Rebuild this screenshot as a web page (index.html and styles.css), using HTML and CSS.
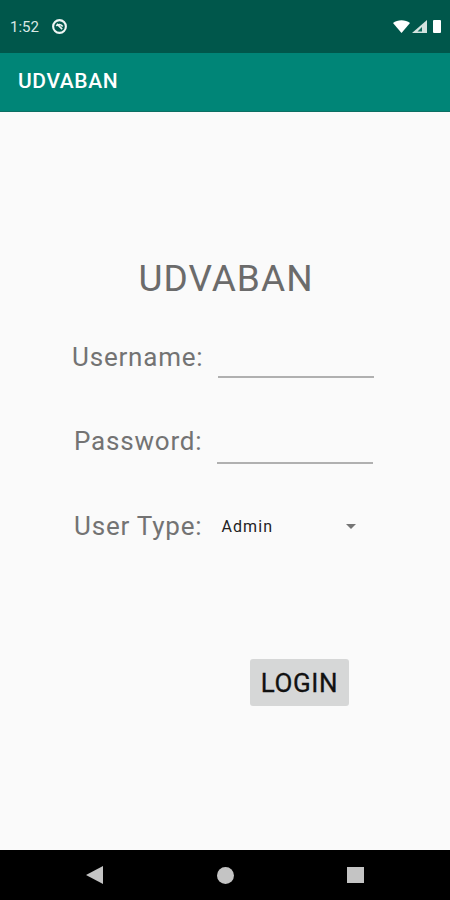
FILE: index.html
```html
<!DOCTYPE html>
<html lang="en">
<head>
    <meta charset="UTF-8">
    <meta name="viewport" content="width=device-width, initial-scale=1.0">
    <title>UDVABAN</title>
    <link rel="stylesheet" href="styles.css">
</head>
<body>
    <div class="phone">
        <div class="status-bar">
            <div class="status-left">
                <span class="clock">1:52</span>
                <svg class="dnd-icon" width="17" height="17" viewBox="0 0 16 16">
                    <circle cx="8" cy="8" r="6" fill="none" stroke="#eef5f3" stroke-width="2"/>
                    <path d="M5 7.5 C6.5 5.5 9.5 5.5 11 8 M5.5 5.5 L10.5 10.5" fill="none" stroke="#eef5f3" stroke-width="1.5"/>
                </svg>
            </div>
            <div class="status-right">
                <svg width="17" height="13" viewBox="0 0 17 13"><path d="M0 3 C4.5 -0.6 12.5 -0.6 17 3 L8.5 13 Z" fill="#fff"/></svg>
                <svg width="15" height="13" viewBox="0 0 15 13">
                    <path d="M15 0 V13 H0 Z" fill="#d3e3df"/>
                    <path d="M10 7 V11.5 H5.5 Z" fill="#0f6a5c"/>
                </svg>
                <div class="battery"></div>
            </div>
        </div>
        <div class="app-bar">UDVABAN</div>

        <main class="content">
            <h1 class="title">UDVABAN</h1>
            <div class="form-row row-user">
                <label class="field-label">Username:</label>
                <div class="line-input"></div>
            </div>
            <div class="form-row row-pass">
                <label class="field-label">Password:</label>
                <div class="line-input"></div>
            </div>
            <div class="form-row row-type">
                <label class="field-label">User Type:</label>
                <div class="spinner">
                    <span>Admin</span>
                    <div class="spinner-arrow"></div>
                </div>
            </div>
            <div class="login-wrap">
                <button class="login-btn">LOGIN</button>
            </div>
        </main>

        <div class="nav-bar">
            <svg width="17" height="18" viewBox="0 0 17 18"><path d="M17 0 V18 L0 9 Z" fill="#c4c4c4"/></svg>
            <div class="nav-home"></div>
            <div class="nav-recent"></div>
        </div>
    </div>
</body>
</html>
```

FILE: styles.css
```css
body {
    margin: 0;
    padding: 0;
    font-family: Roboto, "Liberation Sans", sans-serif;
    background-color: #fafafa;
}
.phone {
    width: 450px;
    height: 900px;
    display: flex;
    flex-direction: column;
    overflow: hidden;
}
.status-bar {
    height: 53px;
    flex: none;
    box-sizing: border-box;
    padding: 0 9px 0 10px;
    background-color: #00574b;
    display: flex;
    align-items: center;
    justify-content: space-between;
}
.status-left {
    display: flex;
    align-items: center;
    gap: 12px;
}
.clock {
    color: #d9e8e4;
    font-size: 15px;
}
.status-right {
    display: flex;
    align-items: center;
    gap: 2px;
}
.battery {
    width: 8px;
    height: 13px;
    margin-left: 4px;
    background-color: #fff;
    border-radius: 1px;
}
.app-bar {
    height: 59px;
    flex: none;
    box-sizing: border-box;
    padding: 0 18px 2px;
    background-color: #008577;
    border-bottom: 1px solid #0c6f63;
    color: #fff;
    font-size: 21px;
    font-weight: 500;
    letter-spacing: 0.6px;
    display: flex;
    align-items: center;
}
.content {
    flex: 1;
    display: flex;
    flex-direction: column;
}
.title {
    margin: 147px 0 0;
    padding-left: 2px;
    height: 40px;
    line-height: 40px;
    font-size: 37px;
    font-weight: 400;
    letter-spacing: 1.05px;
    color: #6b6b6b;
    text-align: center;
}
.form-row {
    display: flex;
    align-items: flex-start;
}
.field-label {
    font-size: 26px;
    line-height: 30px;
    letter-spacing: 0.8px;
    color: #737373;
}
.row-user {
    margin: 43px 0 0 72px;
}
.row-user .line-input {
    margin-left: 15px;
    margin-top: 4px;
}
.row-pass {
    margin: 48px 0 0 74px;
}
.row-pass .line-input {
    margin-left: 15px;
    margin-top: 6px;
}
.row-type {
    margin: 47px 0 0 74px;
}
.line-input {
    width: 156px;
    height: 30px;
    border-bottom: 2px solid #b0b0b0;
}
.spinner {
    margin-left: 19px;
    width: 135px;
    height: 30px;
    display: flex;
    align-items: center;
    justify-content: space-between;
    font-size: 16px;
    letter-spacing: 1.1px;
    color: #222;
}
.spinner-arrow {
    width: 0;
    height: 0;
    border-left: 5px solid transparent;
    border-right: 5px solid transparent;
    border-top: 5px solid #757575;
}
.login-wrap {
    display: flex;
    margin: 118px 0 0 250px;
}
.login-btn {
    width: 99px;
    height: 47px;
    padding: 0;
    border: none;
    border-radius: 3px;
    background-color: #d6d7d7;
    color: #111;
    font-family: inherit;
    font-size: 26px;
    font-weight: 400;
    letter-spacing: 0.6px;
    -webkit-text-stroke: 0.3px #111;
}
.nav-bar {
    height: 50px;
    flex: none;
    box-sizing: border-box;
    padding: 0 86px;
    background-color: #000;
    display: flex;
    align-items: center;
    justify-content: space-between;
}
.nav-home {
    width: 17px;
    height: 17px;
    border-radius: 50%;
    background-color: #c4c4c4;
}
.nav-recent {
    width: 17px;
    height: 16px;
    background-color: #c4c4c4;
}
```
